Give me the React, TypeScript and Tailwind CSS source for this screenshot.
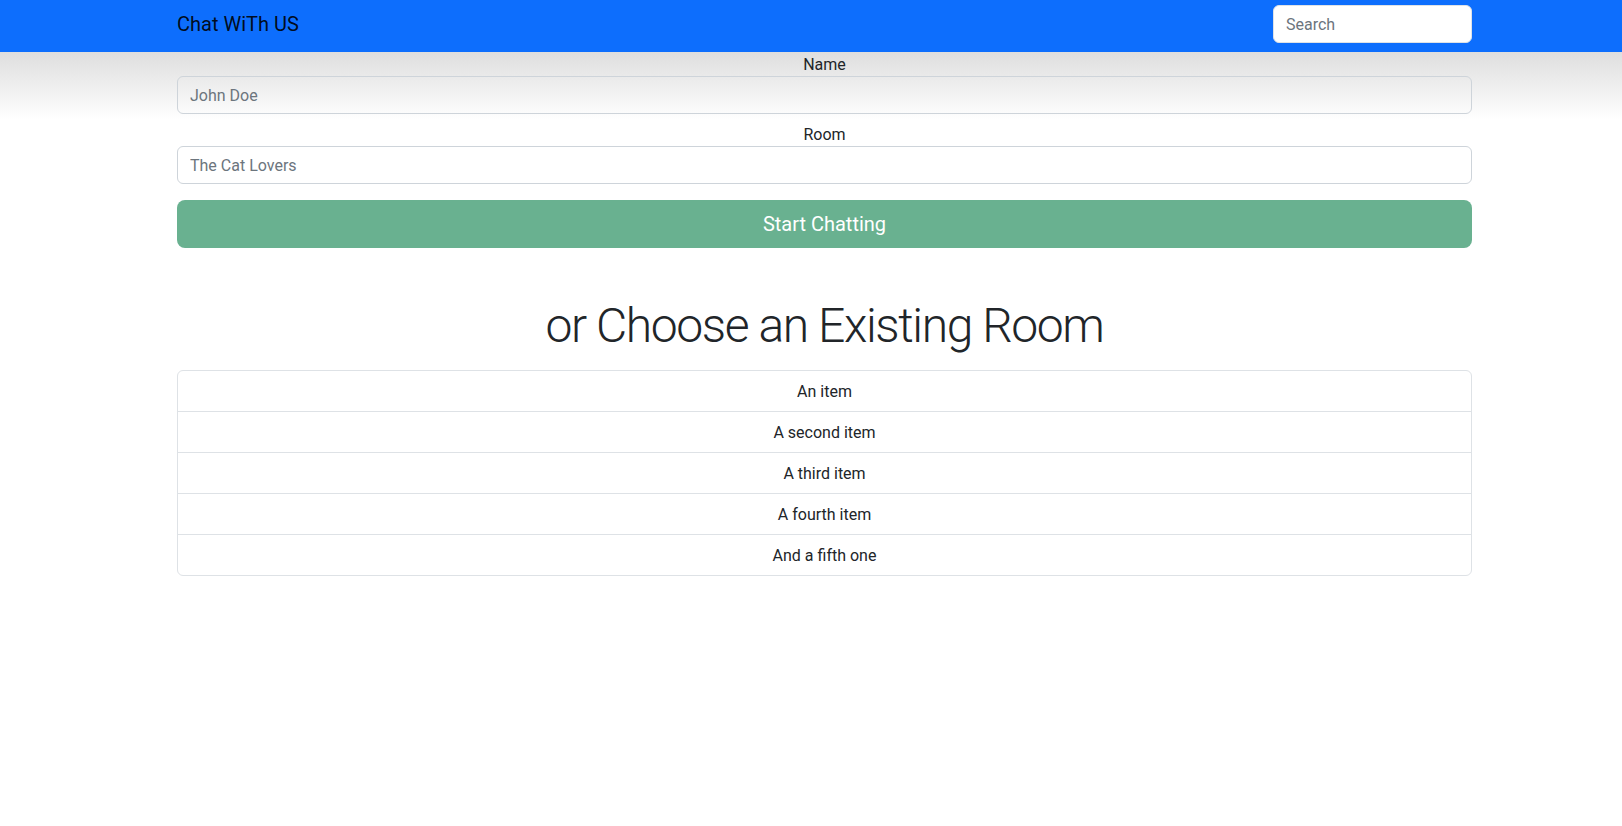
import React from "react";

const font = { fontFamily: 'Roboto, "Liberation Sans", sans-serif' };

export default function App() {
  const items = ["An item", "A second item", "A third item", "A fourth item", "And a fifth one"];
  return (
    <div className="min-h-[826px] bg-white text-[#212529]" style={font}>
      <nav className="h-[52px] bg-[#0d6efd]">
        <div className="ml-[177px] w-[1295px] h-full flex items-start justify-between">
          <span className="text-[20px] leading-[30px] mt-[9px] text-black/90">Chat WiTh US</span>
          <input
            type="search"
            placeholder="Search"
            className="mt-[5px] w-[199px] h-[38px] rounded-[6px] bg-white border border-[#dee2e6] px-3 text-[16px] placeholder:text-[#6c757d] outline-none"
          />
        </div>
      </nav>
      <main className="bg-[linear-gradient(to_bottom,#dedede_0px,#ffffff_68px)]">
        <div className="ml-[177px] w-[1295px] flex flex-col">
          <label className="text-center text-[16px] leading-[24px] pt-px -mb-px">Name</label>
          <input
            placeholder="John Doe"
            className="h-[38px] rounded-[6px] bg-transparent border border-[#ced4da] px-3 text-[16px] placeholder:text-[#6c757d] outline-none mb-2"
          />
          <label className="text-center text-[16px] leading-[24px] pt-px -mb-px">Room</label>
          <input
            placeholder="The Cat Lovers"
            className="h-[38px] rounded-[6px] bg-white border border-[#ced4da] px-3 text-[16px] placeholder:text-[#6c757d] outline-none mb-4"
          />
          <button className="h-[48px] rounded-[8px] bg-[#69b190] text-white text-[20px]">Start Chatting</button>
          <h1 className="text-center text-[48px] leading-[1.2] font-light tracking-[-1.4px] mt-[49px] mb-[15px]">or Choose an Existing Room</h1>
          <ul className="border border-[#dee2e6] rounded-[6px]">
            {items.map((it, i) => (
              <li
                key={it}
                className={`text-center text-[16px] leading-[24px] pt-[9px] pb-[7px] px-4 ${i > 0 ? "border-t border-[#dee2e6]" : ""}`}
              >
                {it}
              </li>
            ))}
          </ul>
        </div>
      </main>
    </div>
  );
}
